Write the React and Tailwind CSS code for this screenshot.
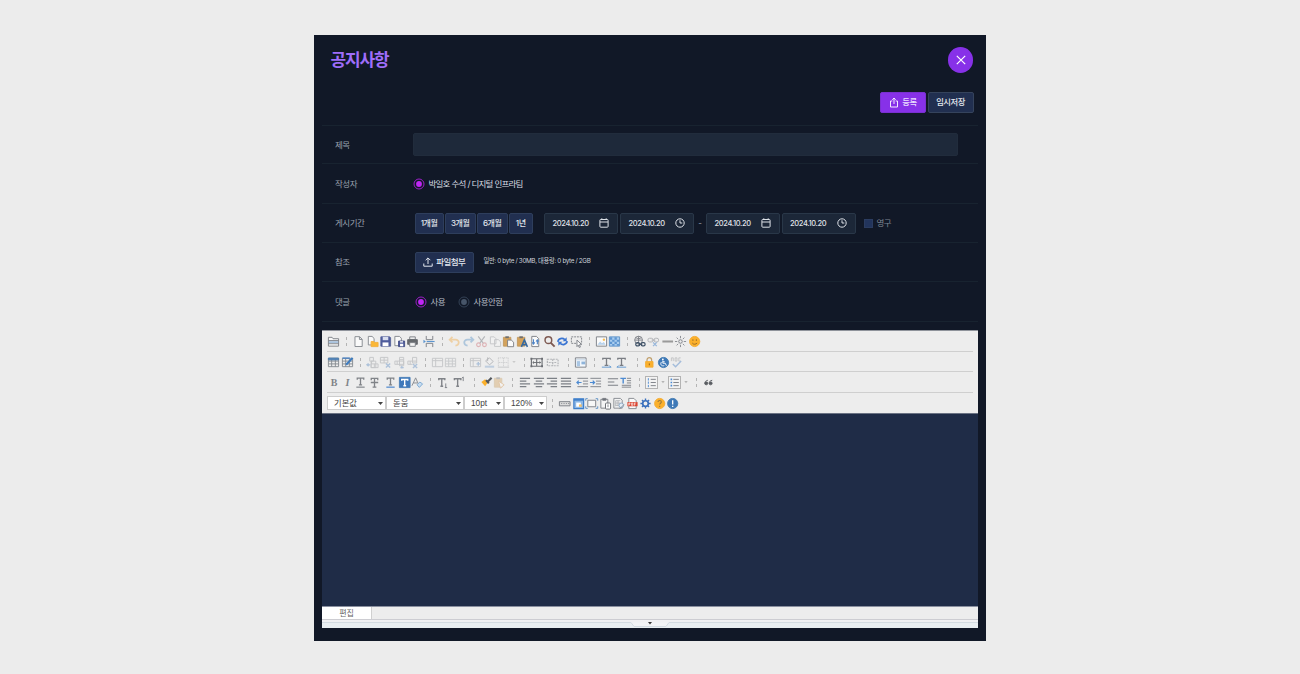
import React from "react";

const KR = "font-['Inter','Noto_Sans_CJK_KR',sans-serif]";

/* ---------- toolbar building blocks ---------- */

function Ico({ children, className = "", dim = false }) {
  return (
    <svg
      viewBox="0 0 14 14"
      fill="none"
      stroke="#7c8086"
      strokeWidth="1"
      className={`h-[13px] w-[13px] shrink-0 overflow-visible ${dim ? "opacity-35" : ""} ${className}`}
    >
      {children}
    </svg>
  );
}

function Sep({ className = "w-[10.7px]" }) {
  return (
    <span className={`flex shrink-0 justify-end pr-[4.500px] ${className}`}>
      <span className="h-[9px] w-px border-l border-dashed border-[#b4b4b4]" />
    </span>
  );
}

function Caret({ className = "" }) {
  return (
    <svg viewBox="0 0 4 3" className={`h-[2.5px] w-[4px] shrink-0 ${className}`}>
      <path d="M0 0h4L2 2.6z" fill="#b5b5b5" />
    </svg>
  );
}

function Glyph({ children, className = "" }) {
  return (
    <span
      className={`flex h-[13px] w-[13px] shrink-0 items-center justify-center font-['Liberation_Serif',serif] text-[10px] leading-none font-bold text-[#808388] ${className}`}
    >
      {children}
    </span>
  );
}

const Page = () => <path d="M3.2 1.8h5l2.8 2.8v7.8H3.2zM8 2v2.8h2.8" fill="#fafafa" stroke="#85898f" />;
const Floppy = () => (
  <>
    <path d="M2 2h9.500l1 1v9H2z" fill="#4f5c9c" stroke="#5a669c" />
    <path d="M4 2h6v3.6H4z" fill="#d9def0" stroke="none" />
    <path d="M3.8 8h6.4v4H3.8z" fill="#fff" stroke="none" />
  </>
);
const TableGrid = ({ c = "#858a91" }) => (
  <path d="M1.5 2.5h11v9h-11zM1.5 5.5h11M1.5 8.5h11M5 2.5v9M9 2.5v9" stroke={c} />
);
const Clip = () => (
  <>
    <path d="M1.5 2.5h8v9.5h-8z" fill="#d3a25c" stroke="#c39a60" />
    <path d="M3.6 1.4h3.8v2H3.6z" fill="#6f6f6f" stroke="none" />
  </>
);

function ToolRow({ children, last = false, gap = "gap-[0.5px]" }) {
  return (
    <div className={`flex h-[20.5px] items-center border-[#cfcfcf] ${gap} ${last ? "pt-[0.500px]" : "border-b pt-[1.500px]"}`}>
      {children}
    </div>
  );
}

function FileTools() {
  return (
    <ToolRow gap="gap-[0.56px]">
      <Ico className="mr-[0.400px]">
        <path d="M1.500 2.500h4l1 1.500h6v8h-11z" fill="#f7f7f7" />
        <path d="M1.500 6h11M1.500 9.400h11" />
        <path d="M2 7.600h10" stroke="#5c8fc4" />
      </Ico>
      <Sep />
      <Ico><Page /></Ico>
      <Ico>
        <path d="M2.5 1.5h4l2.2 2.2v7H2.5z" fill="#fafafa" stroke="#85898f" />
        <path d="M5.5 7h3l1 1H13v4.5H5.5z" fill="#fbb735" stroke="#f3b040" />
      </Ico>
      <Ico><Floppy /></Ico>
      <Ico>
        <path d="M2 1.5h5l2 2v8H2z" fill="#fafafa" stroke="#85898f" />
        <path d="M6 6.5h6.5v6H6z" fill="#4f5c9c" stroke="#444f86" />
        <path d="M7.6 9.5h3.4v2.7H7.6zM7.6 6.8h3.2v1.4H7.6z" fill="#fff" stroke="none" />
      </Ico>
      <Ico>
        <path d="M4 2h6v3H4z" fill="#ececec" />
        <path d="M1.8 5h10.4v5H1.8z" fill="#66696e" stroke="#66696e" />
        <path d="M4 8.2h6v4H4z" fill="#f5f5f5" />
      </Ico>
      <Ico className="ml-[3px]">
        <path d="M3.5 1v4h7V1M3.5 13V9h7v4" />
        <path d="M4 7h8.5" stroke="#5c95cf" strokeWidth="1.2" />
        <path d="M.5 5l2.6 2-2.6 2z" fill="#5c95cf" stroke="none" />
      </Ico>
      <Sep className="w-[11px]" />
      <Ico dim>
        <path d="M4.8 2L1.8 5l3 3M2 5h6c5 0 4.5 6 0 6.5" stroke="#f29c1f" strokeWidth="1.9" />
      </Ico>
      <Ico className="opacity-50">
        <path d="M9.2 2l3 3-3 3M12 5H6C1 5 1.500 11 6 11.500" stroke="#6fa0cc" strokeWidth="1.9" />
      </Ico>
      <Ico className="opacity-55">
        <path d="M3.500 1.500L9 9M10.500 1.500L5 9" stroke="#85898f" strokeWidth="1.200" />
        <circle cx="3.800" cy="10.500" r="2" stroke="#d3848a" strokeWidth="1.200" />
        <circle cx="10.200" cy="10.500" r="2" stroke="#d3848a" strokeWidth="1.200" />
      </Ico>
      <Ico dim>
        <path d="M1.500 2h4l2 2v5.500h-6zM6 5h4l2.500 2.300v5H6z" fill="#fafafa" />
      </Ico>
      <Ico>
        <Clip />
        <path d="M6 5.500h4l2.500 2.300v4.800H6z" fill="#fafafa" />
      </Ico>
      <Ico>
        <Clip />
        <path d="M5.800 12.800L9 5.300l3.300 7.500M7 10.500h4" stroke="#35689f" strokeWidth="1.700" />
      </Ico>
      <Ico>
        <path d="M3 1.500h5l2.500 2.500v8.500H3z" fill="#fafafa" />
        <path d="M4.800 4.500v5M3.500 8l1.300 1.700L6.200 8M9 10V5.500M7.600 7L9 5.300 10.500 7" stroke="#4c83c6" strokeWidth="1.200" />
      </Ico>
      <Ico>
        <circle cx="5.800" cy="5.600" r="3.600" stroke="#7e5a52" strokeWidth="1.600" />
        <path d="M8.500 8.500l4 4" stroke="#7e5a52" strokeWidth="2.100" />
      </Ico>
      <Ico>
        <path d="M2 7.300C2.500 3.500 7 2.800 9.500 5M12 6.700c-.5 3.800-5 4.500-7.500 2.300" stroke="#3974d2" strokeWidth="1.800" />
        <path d="M11.500 2.300v4.500H7.200zM2.500 11.700V7.200h4.300z" fill="#3974d2" stroke="none" />
      </Ico>
      <Ico>
        <path d="M1.500 2h11v7h-11z" strokeDasharray="2 1" />
        <path d="M7.500 5.500l5 4.800-2.300.2 1 2.500-1.300.4-1-2.400-1.400 1.500z" fill="#fafafa" />
      </Ico>
      <Sep className="w-[10.6px]" />
      <Ico>
        <path d="M1.500 2h11v10h-11z" fill="#fbfbfb" />
        <path d="M2.500 10.500l3-3.500 2 2 2-1.500 2 3z" fill="#b8d2ec" stroke="none" />
        <circle cx="9.600" cy="5" r="1.300" fill="#f7bd55" stroke="none" />
      </Ico>
      <Ico>
        <path d="M1.500 2h11v10h-11z" fill="#a9cdef" stroke="#5f93c8" />
        <path d="M2 2.500h2.500V5H2zM7 2.500h2.500V5H7zM4.500 5H7v2.300H4.500zM9.500 5H12v2.300H9.500zM2 7.300h2.500v2.300H2zM7 7.300h2.500v2.300H7zM4.500 9.600H7v2H4.500zM9.500 9.600H12v2H9.500z" fill="#5e96d2" stroke="none" />
      </Ico>
      <Sep className="w-[11px]" />
      <Ico>
        <circle cx="6" cy="5.500" r="4.200" />
        <path d="M2 5.500h8M6 1.300v8.400M3.200 2.800c1.500 1.500 4.200 1.500 5.600 0" />
        <rect x="3" y="8.300" width="4.200" height="3.400" rx="1.500" stroke="#3f5268" strokeWidth="1.300" />
        <rect x="8.800" y="8.300" width="4.200" height="3.400" rx="1.500" stroke="#3f5268" strokeWidth="1.300" />
        <path d="M6 10h4" stroke="#3f5268" strokeWidth="1.300" />
      </Ico>
      <Ico className="opacity-55">
        <rect x="1" y="3.500" width="5.500" height="4" rx="1.800" />
        <rect x="7.500" y="3.500" width="5" height="4" rx="1.800" />
        <path d="M5 5.500h4" />
        <path d="M6.500 8l4 4M10.500 8l-4 4" stroke="#4f88cc" strokeWidth="1.300" />
      </Ico>
      <Ico className="ml-[0.300px]"><path d="M1.500 7h11.500" stroke="#9a9a9a" strokeWidth="2.200" /></Ico>
      <Ico>
        <circle cx="7" cy="7" r="1.900" />
        <path d="M7 1v2.500M7 10.500V13M1 7h2.500M10.500 7H13M2.800 2.800l1.700 1.700M9.500 9.500l1.700 1.700M11.200 2.800L9.500 4.500M4.500 9.500l-1.700 1.700" strokeWidth=".9" />
      </Ico>
      <Ico className="ml-[0.300px]">
        <circle cx="7.200" cy="7" r="5.500" fill="#fbb02c" stroke="#f3ad35" />
        <path d="M5.300 4.600v1.800M9 4.600v1.800M4.600 8.600c1 1.800 4 1.800 5.200 0" stroke="#9c6d26" />
      </Ico>
    </ToolRow>
  );
}

function TableTools() {
  return (
    <ToolRow gap="gap-[0.55px]">
      <Ico>
        <TableGrid />
        <path d="M1.500 2.200h11v2h-11z" fill="#4b83c4" stroke="#5580a8" />
      </Ico>
      <Ico>
        <TableGrid />
        <path d="M1.500 2.300h8" stroke="#4b83c4" strokeWidth="1.500" />
        <path d="M5.500 9.500l7-7.500" stroke="#3d7cc0" strokeWidth="2.200" />
      </Ico>
      <Sep className="w-[11px]" />
      <Ico dim><path d="M4 1.500h4v4H4zM6 5.500v3M5.500 5.500h5v7h-5zM5.500 8.500H13v4H5.500zM9 8.500v4" /><path d="M1 9.500h3.500M2.800 8L1 9.500 2.800 11" stroke="#3a73b8" strokeWidth="1.400" /></Ico>
      <Ico dim><path d="M1.500 1.500h8v6h-8zM5.500 1.500v6M1.500 4.500h8" /><path d="M7.500 8l4.500 4.500M12 8l-4.500 4.500" stroke="#3a73b8" strokeWidth="1.500" /></Ico>
      <Ico dim><path d="M7 1.500h4.500v9H7zM2 5.500h9.500v3.500H2zM4.500 5.500v3.500M7 4h4.500" /><path d="M9.500 10.500v3M8 12.500h3.500" stroke="#3a73b8" strokeWidth="1.400" /></Ico>
      <Ico dim><path d="M7 1.500h4.500v6H7zM2 5.500h9.500M2 9h5M2 5.500V9M4.500 5.500V9" /><path d="M7.500 8.500l4.500 4.500M12 8.500l-4.500 4.500" stroke="#3a73b8" strokeWidth="1.500" /></Ico>
      <Sep className="w-[10.400px]" />
      <Ico dim><path d="M1.500 2.500h11v9h-11zM1.500 5h11M5 2.500v9" /></Ico>
      <Ico dim><TableGrid /></Ico>
      <Sep className="w-[11px]" />
      <Ico dim><path d="M1.500 2.500h11v9h-11zM1.500 5h11M4.500 2.500v9" /><path d="M8 8.500h4M10 6.500v4" stroke="#3a73b8" strokeWidth="1.500" /></Ico>
      <Ico className="opacity-50"><path d="M3 5l4-3 4 4-4 3.500L3 5.500zM5 1.500v4" fill="#f0f0f0" /><path d="M2 11.500h10" stroke="#93b1d3" strokeWidth="2.200" /></Ico>
      <Ico dim><path d="M1.500 2v10M7 2v9M12 2v9M1.500 2H12M2 7h10" strokeDasharray="1 1" /><path d="M1 12h12" /></Ico>
      <Caret className="ml-[2px] opacity-60" />
      <Sep className="w-[12.500px]" />
      <Ico>
        <path d="M1.500 3h11.500v8H1.500zM7.200 3v8" stroke="#6b6e73" strokeWidth="1.200" />
        <path d="M3 7h8.500M4.300 5.800L3 7l1.300 1.200M10.200 5.800L11.500 7l-1.300 1.200" stroke="#6b6e73" />
        <path d="M.5 2h2v2h-2zM12 2h2v2h-2zM.5 10h2v2h-2zM12 10h2v2h-2z" fill="#6b6e73" stroke="none" />
      </Ico>
      <Ico className="ml-[2.500px] opacity-50">
        <path d="M1.500 3.500h11.500v7H1.500zM7.200 3.500v7M3 7h8.500" strokeDasharray="2 1" strokeWidth="1.300" />
      </Ico>
      <Sep className="w-[14px]" />
      <Ico>
        <path d="M1.500 2h11.500v10H1.500z" fill="#f4f8fc" />
        <path d="M2 4h10.500" stroke="#d3dfeb" strokeWidth="1.600" />
        <path d="M3 5.500h3.500V11H3z" fill="#a9c6e4" stroke="none" />
        <path d="M8 6h4v3H8z" fill="#8fb4da" stroke="none" />
      </Ico>
      <Sep className="w-[11.700px]" />
      <Ico><path d="M3 4V2.500h8V4M7 2.500V10M5 10h4" stroke="#7a7d83" strokeWidth="1.400" /><path d="M2 12h10l-2-1.500" stroke="#5c95cf" /></Ico>
      <Ico className="ml-[1.800px]"><path d="M3 4V2.500h8V4M7 2.500V10M5 10h4" stroke="#7a7d83" strokeWidth="1.400" /><path d="M12 12H2l2-1.500" stroke="#5c95cf" /></Ico>
      <Sep className="w-[14.400px]" />
      <Ico><path d="M4.300 6V4.300c0-3.500 5-3.500 5 0V6" stroke="#c0a06d" strokeWidth="1.300" /><path d="M2.800 6h8v6h-8z" fill="#fbb02c" stroke="#f3ad35" /><path d="M6.800 8v2" stroke="#8c5d16" /></Ico>
      <Ico>
        <circle cx="7" cy="7" r="5.500" fill="#3e79b8" stroke="#447cb2" />
        <circle cx="6.300" cy="3.600" r="1" fill="#fff" stroke="none" />
        <path d="M6.300 4.800v3h2.600l1.300 2.600M4.800 6.500c-2 2.500.5 5 3 3.800M6.300 6.200h2" stroke="#fff" />
      </Ico>
      <Ico className="opacity-45"><path d="M1.500 2v3.500M1.500 2h2v3.500M5.500 2v3.500h2V2zM11.500 2h-2v3.500h2" strokeWidth=".8" /><path d="M3 8.500l3 3 6-6" stroke="#4c83c6" strokeWidth="1.500" /></Ico>
    </ToolRow>
  );
}

const TBar = ({ line = "#7c8086" }) => (
  <>
    <path d="M3.500 4V2.200h7V4M7 2.200v7.300M5.300 9.500h3.400" stroke="#808388" strokeWidth="1.400" />
    <path d="M2.500 12h9" stroke={line} strokeWidth="1.200" />
  </>
);

function TextTools() {
  return (
    <ToolRow>
      <Glyph className="ml-[0.500px]">B</Glyph>
      <Glyph className="italic">I</Glyph>
      <Ico className="-ml-[0.500px]"><TBar /></Ico>
      <Ico className="ml-[0.500px]"><path d="M3.500 4.500V2.500h7v2M7 2.500V12M5 12h4M3 7h8" stroke="#808388" strokeWidth="1.400" /></Ico>
      <Ico className="ml-[2.500px]"><TBar line="#3f7fca" /></Ico>
      <Ico>
        <path d="M1.500 1.500h11.500v11H1.500z" fill="#3e78bb" stroke="#4a7fb8" />
        <path d="M4 5V3.800h6.500V5M7.200 4v6.500M5.800 10.500h3" stroke="#fff" strokeWidth="1.500" />
      </Ico>
      <Ico>
        <path d="M1 10.500L5 2l3 7M2.500 7.500h4" stroke="#85898f" />
        <path d="M6.500 9.500l3-3 3 2-3.500 3.800z" fill="#c7ddf1" stroke="#7da9d2" />
      </Ico>
      <Sep className="w-[11.300px]" />
      <Ico><path d="M3 4.500V3h6.500v1.500M6.200 3v8M4.700 11h3" stroke="#808388" strokeWidth="1.500" /><path d="M10.500 8v4.500M9.500 12.500h2.500" /></Ico>
      <Ico className="ml-[3px]"><path d="M1.500 4.500V3h7v1.500M5 3v8M3.500 11h3" stroke="#808388" strokeWidth="1.500" /><path d="M11 1v4.500M9.800 2L11 1" /></Ico>
      <Sep className="w-[13px]" />
      <Ico>
        <path d="M1.500 6.500l4-3 3 3.500-3 4z" fill="#fbb02c" stroke="none" />
        <path d="M6.500 4.500l3 3.500M8.500 6l4-4" stroke="#55595e" strokeWidth="2.300" />
      </Ico>
      <Ico className="opacity-40"><Clip /><path d="M6 5.500l6 4-4 3.500z" fill="#fafafa" stroke="#d08b3c" /></Ico>
      <Sep className="w-[11px]" />
      <Ico><path d="M2 2.500h11M2 5.500h7M2 8.500h11M2 11.500h7" strokeWidth="1.200" /></Ico>
      <Ico><path d="M2 2.500h11M4 5.500h7M2 8.500h11M4 11.500h7" strokeWidth="1.200" /></Ico>
      <Ico><path d="M2 2.500h11M6 5.500h7M2 8.500h11M6 11.500h7" strokeWidth="1.200" /></Ico>
      <Ico><path d="M2 2.500h11M2 5.500h11M2 8.500h11M2 11.500h11" strokeWidth="1.200" /></Ico>
      <Ico className="ml-[3.500px]"><path d="M1.500 2.500h11.500M7.500 5.500H13M7.500 8.500H13M1.500 11.500h11.500" /><path d="M1 7h5M3 5L1 7l2 2" stroke="#4c8ad2" strokeWidth="1.300" /></Ico>
      <Ico><path d="M1.500 2.500h11.500M7.500 5.500H13M7.500 8.500H13M1.500 11.500h11.500" /><path d="M1 7h5M4 5l2 2-2 2" stroke="#4c8ad2" strokeWidth="1.300" /></Ico>
      <Ico className="ml-[3px]"><path d="M2 3h11M2 6.500h7M2 10h11" strokeWidth="1.200" /></Ico>
      <Ico><path d="M8.500 2.500H13M8.500 5H13M8.500 7.500H13M3 10h10M3 12h10" /><path d="M1.500 2.500h6M4.500 2.500v5.500" stroke="#4c8ad2" strokeWidth="1.500" /></Ico>
      <Sep className="w-[11.400px]" />
      <Ico className="border border-[#b3b3b3] bg-[#f3f3f3]">
        <path d="M6 3h6.500M6 7h6.500M6 11h6.500" strokeWidth="1.200" />
        <path d="M3 1.500v3M3 5.800v2.800M3 10v3" stroke="#4c8ad2" strokeWidth="1.200" />
      </Ico>
      <Caret className="mx-[2.500px]" />
      <Ico className="border border-[#b3b3b3] bg-[#f3f3f3]">
        <path d="M5.500 3h7M5.500 7h7M5.500 11h7" strokeWidth="1.200" />
        <path d="M2 2h2v2H2zM2 6h2v2H2zM2 10h2v2H2z" fill="#4c8ad2" stroke="none" />
      </Ico>
      <Caret className="ml-[2.500px]" />
      <Sep className="w-[13px]" />
      <Ico>
        <path d="M6.300 4.600C4 5 3 6.300 3 7.800a1.600 1.600 0 1 0 1.700-1.500M11 4.600C8.700 5 7.700 6.300 7.700 7.800a1.600 1.600 0 1 0 1.700-1.500" stroke="#5a5d62" strokeWidth="1" />
        <circle cx="4.500" cy="7.800" r="1.600" fill="#5a5d62" stroke="none" />
        <circle cx="9.200" cy="7.800" r="1.600" fill="#5a5d62" stroke="none" />
      </Ico>
    </ToolRow>
  );
}

function ToolSelect({ label, className }) {
  return (
    <div className={`flex h-[14px] shrink-0 items-center justify-between border border-[#cdcdcd] bg-white pr-[2px] pl-[6px] ${className}`}>
      <span className="font-['Liberation_Sans','Noto_Sans_CJK_KR',sans-serif] text-[8.300px] leading-none whitespace-nowrap text-[#444]">{label}</span>
      <svg viewBox="0 0 5 3" className="h-[3px] w-[5px]"><path d="M0 0h5L2.500 3z" fill="#444" /></svg>
    </div>
  );
}

function FontTools() {
  return (
    <ToolRow last>
      <ToolSelect label="기본값" className="w-[58.500px]" />
      <ToolSelect label="돋움" className="w-[77.500px]" />
      <ToolSelect label="10pt" className="w-[39.500px]" />
      <ToolSelect label="120%" className="w-[42.500px]" />
      <Sep className="w-[10.800px]" />
      <Ico><path d="M1.500 5h11.500v4.500H1.500zM3.500 7h1M6 7h1M8.500 7h1M11 7h1" fill="#dcdcdc" /></Ico>
      <Ico>
        <path d="M2 2h10.500v10.500H2z" fill="#8db8e6" stroke="#3f7fca" strokeWidth="1.300" />
        <path d="M2 3h10.500" stroke="#3f7fca" strokeWidth="2" />
        <path d="M4.500 6h5v4.500h-5z" fill="#fff" stroke="none" />
        <path d="M7.500 8h3v2.500h-3z" fill="#f6c069" stroke="none" />
      </Ico>
      <Ico>
        <path d="M3 3.500h8.500v7H3z" fill="#f7f7f7" />
        <path d="M.8 4V1.800H3M11.500 1.800h2.200V4M.8 10v2.200H3M13.700 10v2.200h-2.200" stroke="#5c8fc4" />
      </Ico>
      <Ico><path d="M2 2.500h7.500v9.500H2z" fill="#f4f4f4" /><path d="M4 1.500h3.500v2H4z" fill="#6b6f75" /><rect x="7" y="6.500" width="5.500" height="6.500" rx="1" fill="#fff" stroke="#65686d" /><path d="M9.700 8v3" /></Ico>
      <Ico><path d="M2 1.500h7l2 2v8.500H2z" fill="#f4f4f4" stroke="#85898f" /><path d="M4 4h5M4 6.500h5M4 9h3M4 4v6M6.500 4v6" stroke="#a3a6aa" strokeWidth=".8" /><circle cx="10" cy="9" r="2.500" fill="#e3eef7" stroke="#8aa6c4" /><path d="M8 13l5-5" stroke="#85898f" /></Ico>
      <Ico>
        <path d="M3 1.500h5.500L11 4v8.500H3z" fill="#fafafa" stroke="#85898f" />
        <path d="M1.500 5.500h11V10h-11z" fill="#db4632" stroke="none" />
        <path d="M3 9.300V6.500h1.300v1.300H3M6 6.500v2.500h1.300V6.500zM9 9.300V6.500h1.500M9 7.800h1.200" stroke="#fff" strokeWidth=".7" />
      </Ico>
      <Ico>
        <circle cx="7" cy="7" r="3" stroke="#3a70bd" strokeWidth="1.800" />
        <path d="M7 1.500V4M7 10v2.500M1.500 7H4M10 7h2.500M3.200 3.200l1.600 1.600M9.200 9.200l1.600 1.600M10.800 3.200L9.200 4.800M4.800 9.200l-1.600 1.600" stroke="#3a70bd" strokeWidth="1.500" />
      </Ico>
      <Ico>
        <circle cx="7.200" cy="7" r="5.500" fill="#fbb02c" stroke="#f3ad35" />
        <path d="M5.400 5.500c0-2.300 3.600-2.300 3.600 0 0 1.200-1.800 1.300-1.800 2.700M7.200 9.500v1.200" stroke="#9c7a3c" strokeWidth="1.200" />
      </Ico>
      <Ico>
        <circle cx="7.200" cy="7" r="5.500" fill="#3e79b8" stroke="#447cb2" />
        <path d="M7.200 3.500v4.700M7.200 9.500v1.300" stroke="#fff" strokeWidth="1.400" />
      </Ico>
    </ToolRow>
  );
}

/* ---------- form building blocks ---------- */

function FormRow({ label, height, children }) {
  return (
    <div className={`flex items-center border-t border-[#182330] ${height}`}>
      <div className="w-[91px] shrink-0 pt-[1px] pl-[13px] text-[8.500px] leading-none tracking-[-0.500px] text-[#9aa1ad]">{label}</div>
      {children}
    </div>
  );
}

function Radio({ on = false }) {
  return (
    <svg viewBox="0 0 12 12" className="h-[12px] w-[12px] shrink-0" fill="none">
      <circle cx="6" cy="6" r="5" stroke={on ? "#9c1fc8" : "#334155"} strokeWidth="1" />
      <circle cx="6" cy="6" r="2.900" fill={on ? "#c026f5" : "#475569"} />
    </svg>
  );
}

function PeriodButton({ children, className }) {
  return (
    <button className={`flex h-[21px] shrink-0 items-center justify-center rounded-[2px] border border-[#2e3e5c] bg-[#212f50] text-[8px] leading-none font-medium tracking-[-0.450px] text-[#e3e7ee] ${className}`}>
      {children}
    </button>
  );
}

const CalendarIcon = () => (
  <svg viewBox="0 0 10 10" className="h-[10px] w-[10px]" fill="none" stroke="#dde1e7" strokeWidth="1">
    <rect x="0.900" y="1.500" width="8.200" height="7.700" rx="0.800" />
    <path d="M1 4h8M2.800 0.300v1.500M7.200 0.300v1.500" />
  </svg>
);
const ClockIcon = () => (
  <svg viewBox="0 0 10 10" className="h-[10px] w-[10px]" fill="none" stroke="#dde1e7" strokeWidth="1">
    <circle cx="5" cy="5" r="4.200" />
    <path d="M5 2.300V5h2.300" />
  </svg>
);

function DateField({ icon, className = "" }) {
  return (
    <div className={`flex h-[21px] w-[74px] shrink-0 items-center justify-between rounded-[2px] border border-[#293748] bg-[#1c2738] pr-[8px] pl-[7.500px] text-[7.500px] leading-none font-medium tracking-[-0.340px] text-[#e0e4ea] ${className}`}>
      <span className="pt-[1px] whitespace-nowrap">2024.10.20</span>
      {icon}
    </div>
  );
}

function Header() {
  return (
    <header className="flex h-[56px] items-start justify-between pt-[12.300px] pr-[12.700px] pl-[16.500px]">
      <h1 className="pt-[5px] text-[17px] leading-[17px] font-bold tracking-[-1.150px] text-[#9f6dfa]">공지사항</h1>
      <button className="flex h-[25.300px] w-[25.300px] items-center justify-center rounded-full bg-[#8731e8]">
        <svg viewBox="0 0 10 10" className="h-[10px] w-[10px]" fill="none" stroke="#fff" strokeWidth="1.200">
          <path d="M0.800 0.800l8.400 8.400M9.200 0.800L0.800 9.200" />
        </svg>
      </button>
    </header>
  );
}

function Actions() {
  return (
    <div className="flex h-[34px] justify-end gap-[2px] pt-[0.500px] pr-[12.500px] text-[8.300px] leading-none font-medium tracking-[-0.450px]">
      <button className="flex h-[21.500px] w-[45.500px] items-center justify-center gap-[3.500px] rounded-[2px] border border-[#7a30d0] bg-[#8731e8] text-[#eaddff]">
        <svg viewBox="0 0 10 11" className="h-[11px] w-[10px]" fill="none" stroke="#f3eaff" strokeWidth="1">
          <path d="M3.300 4H1.500v6h7V4H6.700M5 7V1.200M3.300 2.700L5 1l1.700 1.700" />
        </svg>
        <span>등록</span>
      </button>
      <button className="flex h-[21.500px] w-[46px] items-center justify-center rounded-[2px] border border-[#35435c] bg-[#212f50] text-[#e3e7ee]">
        임시저장
      </button>
    </div>
  );
}

function Form() {
  return (
    <section className="mx-[8px] h-[205px]">
      <div className="border-b border-[#182330]">
        <FormRow label="제목" height="h-[38px]">
          <input className="h-[23px] w-[545px] rounded-[2px] border border-[#212c3c] bg-[#1e293a] outline-none" />
        </FormRow>
        <FormRow label="작성자" height="h-[40px]">
          <div className="flex items-center gap-[3.500px] text-[8.500px] leading-none tracking-[-0.800px] text-[#d9dde4]">
            <Radio on />
            <span className="pt-[1px] [word-spacing:0.300px]">박일호 수석 / 디지털 인프라팀</span>
          </div>
        </FormRow>
        <FormRow label="게시기간" height="h-[39px]">
          <div className="flex items-center pl-[1.500px]">
            <div className="flex gap-[1.500px]">
              <PeriodButton className="w-[29px]">1개월</PeriodButton>
              <PeriodButton className="w-[30.500px]">3개월</PeriodButton>
              <PeriodButton className="w-[30.500px]">6개월</PeriodButton>
              <PeriodButton className="w-[23.500px]">1년</PeriodButton>
            </div>
            <DateField icon={<CalendarIcon />} className="ml-[11.500px]" />
            <DateField icon={<ClockIcon />} className="ml-[2px]" />
            <span className="w-[12px] text-center text-[8px] leading-none text-[#9aa1ad]">-</span>
            <DateField icon={<CalendarIcon />} />
            <DateField icon={<ClockIcon />} className="ml-[1.500px]" />
            <span className="ml-[8px] h-[9px] w-[9px] border border-[#2b3c60] bg-[#22345c]" />
            <span className="ml-[4px] text-[8.500px] leading-none tracking-[-0.600px] text-[#7d8592]">영구</span>
          </div>
        </FormRow>
        <FormRow label="참조" height="h-[39px]">
          <div className="flex items-center pl-[1.500px]">
            <button className="flex h-[21px] w-[59.500px] items-center justify-center gap-[3px] rounded-[2px] border border-[#2e3e5c] bg-[#212f50] text-[8.500px] leading-none font-medium tracking-[-0.600px] text-[#e3e7ee]">
              <svg viewBox="0 0 10 10" className="h-[10px] w-[10px]" fill="none" stroke="#e3e7ee" strokeWidth="1">
                <path d="M0.800 6.500v2.700h8.400V6.500M5 7V1M2.700 3.200L5 0.900l2.300 2.300" />
              </svg>
              <span>파일첨부</span>
            </button>
            <span className="mb-[1px] ml-[9.500px] text-[6.300px] leading-none tracking-[-0.340px] whitespace-nowrap text-[#cfd3da]">
              일반: 0 byte / 30MB, 대용량: 0 byte / 2GB
            </span>
          </div>
        </FormRow>
        <FormRow label="댓글" height="h-[40px]">
          <div className="flex items-center pl-[2px] text-[8.500px] leading-none tracking-[-0.600px] text-[#b4bac4]">
            <Radio on />
            <span className="ml-[3.500px] w-[27px] pt-[1px]">사용</span>
            <Radio />
            <span className="ml-[4px] pt-[1px]">사용안함</span>
          </div>
        </FormRow>
      </div>
    </section>
  );
}

function Editor() {
  return (
    <section className="mx-[8px] flex h-[298px] flex-col">
      <div className="h-[83px] border-t border-[#8f939b] bg-[#ededed] px-[5px]">
        <FileTools />
        <TableTools />
        <TextTools />
        <FontTools />
      </div>
      <div className="h-[193px] border-t border-[#6a7283] bg-[#1f2c47]" />
      <div className="flex h-[13px] border-t border-[#8a90a0] bg-[#ededed]">
        <div className="flex w-[50px] items-center justify-center border-r border-[#d0d0d0] bg-white font-['Noto_Sans_CJK_KR',sans-serif] text-[8px] leading-none text-[#666]">
          편집
        </div>
      </div>
      <div className="flex h-[9px] justify-center border-t border-[#cdcdd2] bg-[#e9eef2]">
        <svg viewBox="0 0 656 8" className="h-[8px] w-[656px] shrink-0" fill="none">
          <path d="M0 0h656v2.500H0z" fill="#f0f0f3" />
          <path d="M0 2.500h309l3 4h32l3-4h309" fill="#f2f3f6" stroke="#d3dbe2" />
          <path d="M326 2h4l-2 2.400z" fill="#333" />
        </svg>
      </div>
    </section>
  );
}

export default function App() {
  return (
    <div className={`flex h-[674px] w-[1300px] justify-center overflow-hidden bg-[#ececec] pt-[35px] ${KR}`}>
      <main className="flex h-[606px] w-[672px] flex-col bg-[#111827]">
        <Header />
        <Actions />
        <Form />
        <Editor />
      </main>
    </div>
  );
}
